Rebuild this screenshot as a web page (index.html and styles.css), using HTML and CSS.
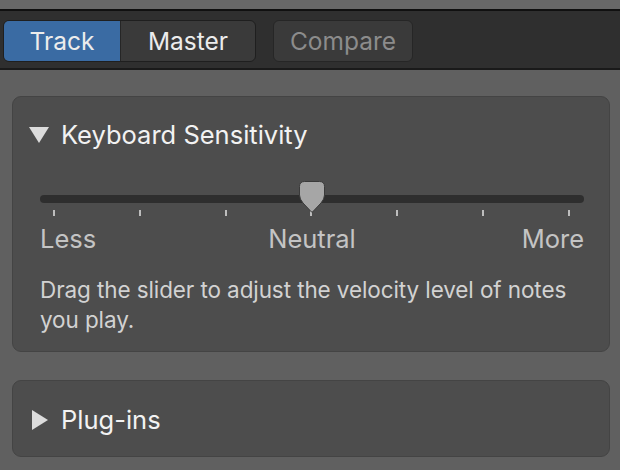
FILE: index.html
```html
<!DOCTYPE html>
<html>
<head>
<meta charset="utf-8">
<link rel="stylesheet" href="styles.css">
</head>
<body>
<div class="app">
  <div class="topstrip"></div>
  <div class="toolbar">
    <div class="segmented">
      <div class="seg seg-active">Track</div>
      <div class="seg">Master</div>
    </div>
    <div class="btn-compare">Compare</div>
  </div>
  <div class="content">
    <section class="card card-open">
      <div class="card-header">
        <svg class="disclosure" width="20" height="16" viewBox="0 0 20 16"><polygon points="0,0 20,0 10,16" fill="#dcdcdc"/></svg>
        <span class="card-title">Keyboard Sensitivity</span>
      </div>
      <div class="slider">
        <div class="track"></div>
        <svg class="thumb" width="26" height="32" viewBox="0 0 26 32"><path d="M5.5 0.5 H20.5 Q25.5 0.5 25.5 5.5 V14 Q25.5 18 22 22 L13.5 31 L12.5 31 L4 22 Q0.5 18 0.5 14 V5.5 Q0.5 0.5 5.5 0.5 Z" fill="#a6a6a6" stroke="#3a3a3a" stroke-width="1"/></svg>
        <div class="ticks">
          <span class="tick"></span><span class="tick"></span><span class="tick"></span><span class="tick"></span><span class="tick"></span><span class="tick"></span><span class="tick"></span>
        </div>
        <div class="labels">
          <span class="lbl-less">Less</span>
          <span class="lbl-neutral">Neutral</span>
          <span class="lbl-more">More</span>
        </div>
      </div>
      <p class="desc">Drag the slider to adjust the velocity level of notes you play.</p>
    </section>
    <section class="card card-closed">
      <div class="card-header">
        <svg class="disclosure" width="16" height="20" viewBox="0 0 16 20"><polygon points="0,0 16,10 0,20" fill="#dcdcdc"/></svg>
        <span class="card-title">Plug-ins</span>
      </div>
    </section>
  </div>
</div>
</body>
</html>
```
FILE: styles.css
```css
* { box-sizing: border-box; }
html, body { margin: 0; padding: 0; }
body {
  width: 620px;
  height: 470px;
  overflow: hidden;
  background: #606060;
  font-family: Inter, "Noto Sans", sans-serif;
  -webkit-font-smoothing: antialiased;
}
.topstrip { height: 9px; background: #686868; }
.toolbar {
  height: 61px;
  background: #2f2f2f;
  border-top: 2px solid #101010;
  border-bottom: 2px solid #1a1a1a;
  padding: 9px 0 0 3px;
  display: flex;
  align-items: flex-start;
  gap: 17px;
}
.segmented {
  display: flex;
  height: 42px;
  border-radius: 6px;
  border: 1px solid #1f1f1f;
  overflow: hidden;
  width: 253px;
  background: #3a3a3a;
}
.seg {
  display: flex;
  align-items: center;
  justify-content: center;
  color: #ececec;
  font-size: 24.5px;
  flex: 1 1 0;
}
.seg-active {
  background: #3a6ba3;
  flex: 0 0 117px;
  border-right: 1px solid #262626;
}
.btn-compare {
  width: 140px;
  height: 42px;
  border: 1px solid #262626;
  border-radius: 6px;
  background: #3a3a3a;
  color: #8c8c8c;
  font-size: 24.5px;
  display: flex;
  align-items: center;
  justify-content: center;
}
.content {
  padding: 26px 10px 0 12px;
  display: flex;
  flex-direction: column;
  gap: 28px;
}
.card {
  background: #4d4d4d;
  border: 1px solid #444444;
  border-radius: 9px;
}
.card-open { height: 256px; }
.card-closed { height: 77px; display: flex; align-items: center; }
.card-header {
  display: flex;
  align-items: center;
  gap: 12px;
  padding-left: 16px;
}
.card-open .card-header { margin-top: 24px; }
.card-closed .card-header { padding-left: 19px; gap: 13px; margin-top: 2px; }
.card-title {
  color: #f2f2f2;
  font-size: 25.5px;
  line-height: 28px;
}
.slider {
  position: relative;
  margin: 46px 25px 0 27px;
}
.track {
  height: 8px;
  border-radius: 4px;
  background: #2e2e2e;
}
.thumb {
  position: absolute;
  left: 259px;
  top: -14px;
}
.ticks {
  display: flex;
  justify-content: space-between;
  padding: 0 14px 0 13px;
  margin-top: 7px;
}
.tick {
  width: 2px;
  height: 6px;
  background: #bdbdbd;
}
.labels {
  display: grid;
  grid-template-columns: 1fr auto 1fr;
  margin-top: 9px;
  color: #c4c4c4;
  font-size: 25.5px;
  line-height: 28px;
}
.lbl-more { justify-self: end; }
.desc {
  margin: 22px 25px 0 27px;
  color: #d2d2d2;
  font-size: 22.5px;
  letter-spacing: -0.1px;
  line-height: 30px;
}
```
